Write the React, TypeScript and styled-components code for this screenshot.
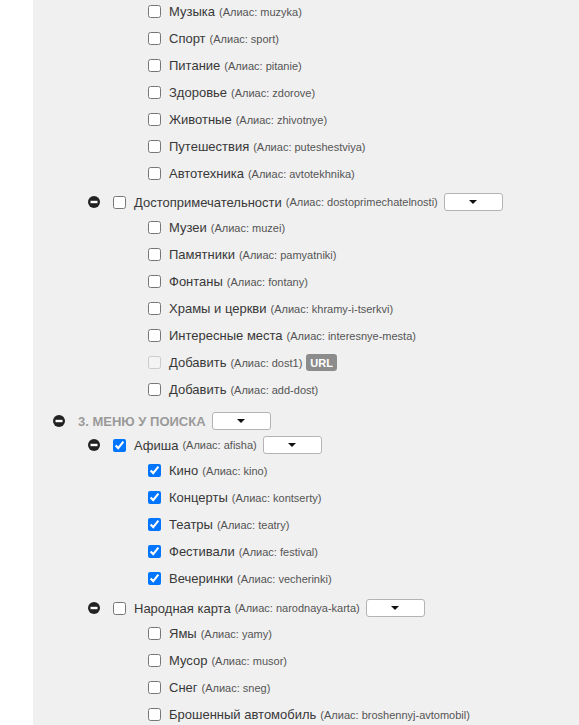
import React from "react";
import styled, { createGlobalStyle } from "styled-components";

const GlobalStyle = createGlobalStyle`
  html, body {
    margin: 0;
    padding: 0;
    background: #ffffff;
    font-family: Arial, "Liberation Sans", sans-serif;
    overflow: hidden;
  }
`;

const Panel = styled.div`
  margin-left: 33px;
  min-height: 100vh;
  background: #f0f0f0;
  overflow: hidden;
`;

const Scroll = styled.div`
  margin-top: -2px;
  padding-left: 20px;
`;

const List = styled.ul<{ $indent?: number }>`
  list-style: none;
  margin: 0;
  padding: 0 0 0 ${(p) => p.$indent ?? 0}px;
`;

const Row = styled.div<{ $parent?: boolean; $top?: number }>`
  display: flex;
  align-items: center;
  height: ${(p) => (p.$parent ? 24 : 27)}px;
  margin-top: ${(p) => p.$top ?? 0}px;
  white-space: nowrap;
`;

const Toggle = styled.span`
  display: inline-flex;
  width: 12px;
  height: 12px;
  margin-right: 13px;
  flex: none;
`;

const Check = styled.input.attrs({ type: "checkbox" })`
  width: 13px;
  height: 13px;
  margin: 0 8px 0 0;
  flex: none;
`;

const Label = styled.span`
  font-size: 13px;
  color: #383838;
`;

const Alias = styled.span`
  font-size: 11px;
  color: #555555;
  margin-left: 4px;
`;

const Heading = styled.span`
  font-size: 13px;
  font-weight: bold;
  color: #9a9a9a;
  text-transform: uppercase;
`;

const Dropdown = styled.button`
  display: inline-flex;
  align-items: center;
  justify-content: center;
  width: 59px;
  height: 18px;
  margin-left: 6px;
  padding: 0;
  background: #ffffff;
  border: 1px solid #b4b4b4;
  border-radius: 3px;
  &::after {
    content: "";
    border-left: 4px solid transparent;
    border-right: 4px solid transparent;
    border-top: 4px solid #111111;
  }
`;

const Badge = styled.span`
  display: inline-flex;
  align-items: center;
  height: 17px;
  margin-left: 4px;
  padding: 0 4px;
  background: #8c8c8c;
  border-radius: 3px;
  color: #ffffff;
  font-size: 11px;
  font-weight: bold;
`;

const MinusIcon = () => (
  <Toggle>
    <svg width="12" height="12" viewBox="0 0 12 12">
      <circle cx="6" cy="6" r="6" fill="#222" />
      <rect x="2.5" y="4.8" width="7" height="2.4" fill="#fff" />
    </svg>
  </Toggle>
);

type Leaf = { name: string; alias: string; checked?: boolean; disabled?: boolean; url?: boolean };

const LeafRow = ({ item }: { item: Leaf }) => (
  <li>
    <Row>
      <Check defaultChecked={item.checked} disabled={item.disabled} />
      <Label>{item.name}</Label>
      <Alias>(Алиас: {item.alias})</Alias>
      {item.url && <Badge>URL</Badge>}
    </Row>
  </li>
);

type Group = { name: string; alias: string; checked?: boolean; top: number; items: Leaf[] };

const GroupNode = ({ group }: { group: Group }) => (
  <li>
    <Row $parent $top={group.top}>
      <MinusIcon />
      <Check defaultChecked={group.checked} />
      <Label>{group.name}</Label>
      <Alias>(Алиас: {group.alias})</Alias>
      <Dropdown />
    </Row>
    <List $indent={60}>
      {group.items.map((it) => (
        <LeafRow key={it.alias} item={it} />
      ))}
    </List>
  </li>
);

const hobbies: Leaf[] = [
  { name: "Музыка", alias: "muzyka" },
  { name: "Спорт", alias: "sport" },
  { name: "Питание", alias: "pitanie" },
  { name: "Здоровье", alias: "zdorove" },
  { name: "Животные", alias: "zhivotnye" },
  { name: "Путешествия", alias: "puteshestviya" },
  { name: "Автотехника", alias: "avtotekhnika" },
];

const sights: Group = {
  name: "Достопримечательности",
  alias: "dostoprimechatelnosti",
  top: 3,
  items: [
    { name: "Музеи", alias: "muzei" },
    { name: "Памятники", alias: "pamyatniki" },
    { name: "Фонтаны", alias: "fontany" },
    { name: "Храмы и церкви", alias: "khramy-i-tserkvi" },
    { name: "Интересные места", alias: "interesnye-mesta" },
    { name: "Добавить", alias: "dost1", disabled: true, url: true },
    { name: "Добавить", alias: "add-dost" },
  ],
};

const afisha: Group = {
  name: "Афиша",
  alias: "afisha",
  checked: true,
  top: 0,
  items: [
    { name: "Кино", alias: "kino", checked: true },
    { name: "Концерты", alias: "kontserty", checked: true },
    { name: "Театры", alias: "teatry", checked: true },
    { name: "Фестивали", alias: "festival", checked: true },
    { name: "Вечеринки", alias: "vecherinki", checked: true },
  ],
};

const peopleMap: Group = {
  name: "Народная карта",
  alias: "narodnaya-karta",
  top: 4,
  items: [
    { name: "Ямы", alias: "yamy" },
    { name: "Мусор", alias: "musor" },
    { name: "Снег", alias: "sneg" },
    { name: "Брошенный автомобиль", alias: "broshennyj-avtomobil" },
  ],
};

export default function App() {
  return (
    <>
      <GlobalStyle />
      <Panel>
        <Scroll>
          <List>
            <li>
              <List $indent={35}>
                <li>
                  <List $indent={60}>
                    {hobbies.map((it) => (
                      <LeafRow key={it.alias} item={it} />
                    ))}
                  </List>
                </li>
                <GroupNode group={sights} />
              </List>
            </li>
            <li>
              <Row $parent $top={6}>
                <MinusIcon />
                <Heading>3. Меню у поиска</Heading>
                <Dropdown />
              </Row>
              <List $indent={35}>
                <GroupNode group={afisha} />
                <GroupNode group={peopleMap} />
              </List>
            </li>
          </List>
        </Scroll>
      </Panel>
    </>
  );
}
